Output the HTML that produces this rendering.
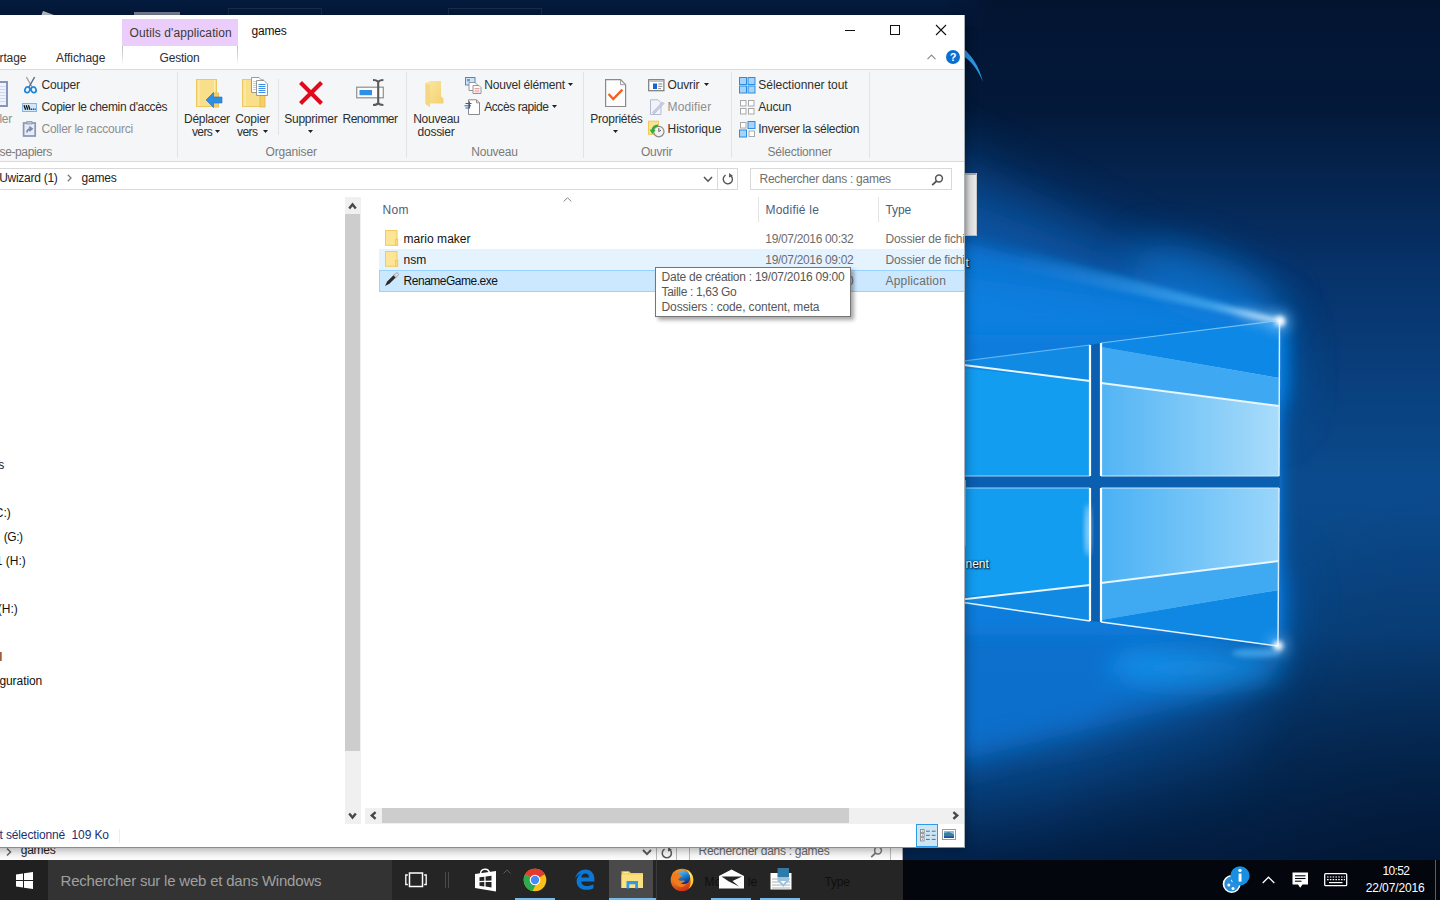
<!DOCTYPE html>
<html lang="fr">
<head>
<meta charset="utf-8">
<title>games</title>
<style>
*{box-sizing:border-box;margin:0;padding:0}
html,body{width:1440px;height:900px;overflow:hidden;background:#04183a}
body{position:relative;font-family:"Liberation Sans","DejaVu Sans",sans-serif;font-size:12px;color:#222}
#wall{position:absolute;left:0;top:0;width:1440px;height:900px}
.layer{position:absolute;left:0;top:0;width:0;height:0}
.a{position:absolute}
.t{position:absolute;white-space:pre;line-height:1;display:block}
svg.a{overflow:visible}
.vsep{position:absolute;width:1px;background:#e2e3e4}
</style>
</head>
<body>
<!--WALL-->
<svg id="wall" viewBox="0 0 1440 900">
<defs>
<linearGradient id="bgv" x1="0" y1="0" x2="0" y2="1">
<stop offset="0" stop-color="#031431"/>
<stop offset="0.12" stop-color="#03193a"/>
<stop offset="0.3" stop-color="#07326a"/>
<stop offset="0.42" stop-color="#093f7c"/>
<stop offset="0.53" stop-color="#0b4a8c"/>
<stop offset="0.7" stop-color="#0a4888"/>
<stop offset="0.86" stop-color="#052e5c"/>
<stop offset="0.95" stop-color="#031f45"/>
<stop offset="1" stop-color="#031f45"/>
</linearGradient>
<radialGradient id="brdark" cx="1440" cy="900" r="400" gradientUnits="userSpaceOnUse">
<stop offset="0" stop-color="#02132e" stop-opacity="0.7"/><stop offset="0.5" stop-color="#02132e" stop-opacity="0.33"/><stop offset="1" stop-color="#02132e" stop-opacity="0"/>
</radialGradient>
<filter id="b8w" x="-200%" y="-200%" width="500%" height="500%"><feGaussianBlur stdDeviation="7"/></filter>
<filter id="b20" x="-50%" y="-100%" width="200%" height="300%"><feGaussianBlur stdDeviation="20"/></filter>
<filter id="b14w" x="-50%" y="-200%" width="200%" height="500%"><feGaussianBlur stdDeviation="14"/></filter>
<filter id="b8" x="-20%" y="-20%" width="140%" height="140%"><feGaussianBlur stdDeviation="8"/></filter>
<filter id="b14" x="-30%" y="-30%" width="160%" height="160%"><feGaussianBlur stdDeviation="14"/></filter>
<filter id="b25" x="-30%" y="-30%" width="160%" height="160%"><feGaussianBlur stdDeviation="25"/></filter>
<filter id="b3" x="-50%" y="-50%" width="200%" height="200%"><feGaussianBlur stdDeviation="2.5"/></filter>
<filter id="b1" x="-20%" y="-50%" width="140%" height="200%"><feGaussianBlur stdDeviation="0.7"/></filter>
<linearGradient id="pUR" x1="1101" y1="0" x2="1279" y2="0" gradientUnits="userSpaceOnUse">
<stop offset="0" stop-color="#52b4f4"/><stop offset="1" stop-color="#a9dcfb"/>
</linearGradient>
<linearGradient id="pLR" x1="1101" y1="0" x2="1279" y2="0" gradientUnits="userSpaceOnUse">
<stop offset="0" stop-color="#4ab1f4"/><stop offset="1" stop-color="#9ad6fb"/>
</linearGradient>
</defs>
<rect width="1440" height="900" fill="url(#bgv)"/>
<!-- upper beams -->
<polygon points="1286,322 900,120 900,420 1286,420" fill="#0a5cae" opacity="0.45" filter="url(#b25)"/>
<polygon points="1285,322 900,178 900,420 1285,420" fill="#0a66c0" opacity="0.55" filter="url(#b25)"/>
<polygon points="1284,322 900,226 900,400 1284,400" fill="#0b78d8" opacity="0.88" filter="url(#b8)"/>
<polygon points="1282,323 900,268 900,400 1282,400" fill="#0e88ea" opacity="0.55" filter="url(#b14)"/>
<ellipse cx="1205" cy="288" rx="80" ry="34" transform="rotate(20 1205 288)" fill="#0c80e0" opacity="0.6" filter="url(#b20)"/>
<linearGradient id="ray1" x1="1282" y1="321" x2="1000" y2="250" gradientUnits="userSpaceOnUse"><stop offset="0" stop-color="#eaf7ff" stop-opacity="0.95"/><stop offset="0.25" stop-color="#5fc0fc" stop-opacity="0.55"/><stop offset="1" stop-color="#2f9cf0" stop-opacity="0.0"/></linearGradient>
<polygon points="1283,320 1000,244 1000,266 1283,325" fill="url(#ray1)" filter="url(#b3)"/>
<!-- lower beams (floor) -->
<polygon points="1295,646 1295,560 900,560 900,860 1250,775" fill="#0a5cae" opacity="0.24" filter="url(#b25)"/>
<polygon points="1290,646 1290,560 900,560 900,800 1230,728" fill="#0a66c0" opacity="0.42" filter="url(#b25)"/>
<polygon points="1284,646 1284,580 900,580 900,775 1200,702 1276,668" fill="#0b74d4" opacity="0.85" filter="url(#b14)"/>
<ellipse cx="1195" cy="668" rx="85" ry="18" fill="#1399f6" opacity="1" filter="url(#b14w)"/>
<rect x="900" y="400" width="540" height="500" fill="url(#brdark)"/>
<!-- mid fill left of logo -->
<rect x="900" y="335" width="382" height="300" fill="#0c7cdc" filter="url(#b8)"/>
<!-- logo gaps backdrop -->
<polygon points="940,364 1090,345 1101,343 1280,320 1279,647 1100,622 1090,621 940,599" fill="#0a5fb0"/>
<!-- panes -->
<polygon points="940,364 1090,345 1090,476 940,476" fill="#129df1"/>
<polygon points="940,488 1090,488 1090,621 940,599" fill="#129df1"/>
<polygon points="1101,343 1279.5,320.5 1279,476 1101,476" fill="url(#pUR)"/>
<polygon points="1101,488 1279,488 1278,646 1101,622" fill="url(#pLR)"/>
<!-- darker top wedge in panes -->
<polygon points="1101,343 1279.5,320.5 1279.3,378 1101,347" fill="#0e88e6"/>
<polygon points="1101,347 1279.3,378 1279.2,406 1101,383" fill="#3ea9f2"/>
<polygon points="940,364 1090,345 1090,381 940,366" fill="#118ae4"/>
<!-- lower wedge -->
<polygon points="1101,620 1278.4,590 1278,646 1101,622" fill="#0f88e4"/>
<polygon points="1101,583 1278.6,561 1278.4,590 1101,620" fill="#3fa9f2"/>
<polygon points="940,599 1090,585 1090,621 940,601" fill="#118ae4"/>
<!-- bright lines -->
<g stroke="#e8f6ff" stroke-width="2" fill="none" filter="url(#b1)">
<line x1="940" y1="362" x2="1090" y2="381"/>
<line x1="1101" y1="383" x2="1279.2" y2="406"/>
<line x1="940" y1="602" x2="1090" y2="585"/>
<line x1="1101" y1="583" x2="1278.6" y2="561"/>
</g>
<g fill="none">
<polyline points="940,364 1090,345" stroke="#5fb6f4" stroke-width="1.2"/>
<polyline points="1101,343 1279.5,320.5" stroke="#6fc0f6" stroke-width="1.2"/>
<polyline points="1279.5,320.5 1279,476" stroke="#d4eefe" stroke-width="1.5"/>
<line x1="1279" y1="488" x2="1278" y2="646" stroke="#d4eefe" stroke-width="1.5"/>
<polyline points="940,476 1090,476" stroke="#9fd4fa" stroke-width="1"/>
<polyline points="1101,476 1279,476" stroke="#cfeafd" stroke-width="1"/>
<polyline points="940,488 1090,488" stroke="#9fd4fa" stroke-width="1"/>
<polyline points="1101,488 1279,488" stroke="#cfeafd" stroke-width="1"/>
<g stroke="#ffffff" stroke-width="2.2" filter="url(#b1)">
<line x1="1090" y1="345" x2="1090" y2="476"/><line x1="1101" y1="343" x2="1101" y2="476"/>
<line x1="1090" y1="488" x2="1090" y2="621"/><line x1="1101" y1="488" x2="1101" y2="622"/>
</g>
<g stroke="#e4f4ff" stroke-width="1.5">
<line x1="940" y1="599" x2="1090" y2="621"/><line x1="1101" y1="622" x2="1278" y2="646"/>
</g>
</g>
<!-- flares -->
<ellipse cx="1262" cy="318" rx="26" ry="5" transform="rotate(14 1262 318)" fill="#bfe4ff" opacity="0.5" filter="url(#b8w)"/>
<circle cx="1280" cy="321" r="10" fill="#8fd0ff" opacity="0.5" filter="url(#b8w)"/>
<circle cx="1278" cy="646" r="10" fill="#8fd0ff" opacity="0.5" filter="url(#b8w)"/>
<circle cx="1280" cy="321" r="5" fill="#ffffff" filter="url(#b3)"/>
<circle cx="1278" cy="646" r="5" fill="#ffffff" filter="url(#b3)"/>
<ellipse cx="1256" cy="653" rx="24" ry="4.5" fill="#5fc0ff" opacity="0.55" filter="url(#b3)"/>
<ellipse cx="1088" cy="530" rx="3" ry="26" fill="#ffffff" opacity="0.55" filter="url(#b3)"/>
</svg>
<!--/WALL-->
<div class="layer" id="desktop">
<div class="a" style="left:0;top:840px;width:903px;height:30px;background:#ffffff;border-right:1px solid #b0b0b0"></div>
<svg class="a" style="left:6px;top:848px" width="6" height="8" viewBox="0 0 6 8"><polyline points="1,0.5 4.5,4 1,7.5" fill="none" stroke="#6a6a6a" stroke-width="1.5"/></svg>
<span class="t" style="left:20.80px;top:844.00px;font-size:12px;color:#222;letter-spacing:-0.286px;">games</span>
<svg class="a" style="left:642px;top:849px" width="10" height="7" viewBox="0 0 10 7"><polyline points="1,1 5,5.2 9,1" fill="none" stroke="#5c5c5c" stroke-width="1.9"/></svg>
<div class="a" style="left:656px;top:847px;width:1px;height:13px;background:#bcbcbc"></div>
<svg class="a" style="left:660px;top:846px" width="14" height="14" viewBox="0 0 14 14"><path d="M10.3,4.2 A4.6,4.6 0 1 1 4.6,3.2" fill="none" stroke="#5c5c5c" stroke-width="1.5"/><polygon points="8.2,1 12,4 8,5.6" fill="#5c5c5c"/></svg>
<div class="a" style="left:676px;top:847px;width:1px;height:13px;background:#bcbcbc"></div>
<div class="a" style="left:689px;top:847px;width:1px;height:13px;background:#bcbcbc"></div>
<div class="a" style="left:890px;top:847px;width:1px;height:13px;background:#bcbcbc"></div>
<span class="t" style="left:698.60px;top:845.00px;font-size:12px;color:#6a6a6a;letter-spacing:-0.287px;">Rechercher dans : games</span>
<svg class="a" style="left:870px;top:846px" width="13" height="12" viewBox="0 0 13 12"><circle cx="8" cy="4.5" r="3.4" fill="none" stroke="#787878" stroke-width="1.5"/><line x1="5.6" y1="7" x2="1.2" y2="11.2" stroke="#787878" stroke-width="1.8"/></svg>
<div class="a" style="left:960px;top:173px;width:17px;height:63px;background:linear-gradient(#a8a8a8 0,#a8a8a8 2px,transparent 2px),linear-gradient(90deg,#c4c4c4 5px,#e4e4e4 9px,#ececec 100%);border-right:1px solid #c8c8c8;border-bottom:1px solid #bdbdbd"></div>
<div class="a" style="left:960px;top:480px;width:6px;height:66px;background:#f4f4f4;border-right:1px solid #a0a0a0"></div>
<span class="t" style="left:965.50px;top:257.00px;font-size:12px;color:#fff;text-shadow:1px 1px 2px #000,0 0 2px #000;">t</span>
<span class="t" style="left:965.50px;top:558.00px;font-size:12px;color:#fff;letter-spacing:-0.015px;text-shadow:1px 1px 2px #000,0 0 2px #000;">nent</span>
<svg class="a" style="left:960px;top:44px" width="30" height="44" viewBox="0 0 30 44"><path d="M3,4 C12,12 19,22 23,38 C17,24 11,17 3,12 Z" fill="#2a98e6"/></svg>
<div class="a" style="left:0;top:0;width:990px;height:26px;background:linear-gradient(90deg,rgba(8,46,96,.25) 0,rgba(8,46,96,.25) 940px,rgba(8,46,96,0) 990px)"></div>
<div class="a" style="left:228px;top:8px;width:94px;height:12px;border:1px solid #1c2c4c"></div>
<div class="a" style="left:448px;top:8px;width:94px;height:12px;border:1px solid #1c2c4c"></div>
<div class="a" style="left:134px;top:12px;width:46px;height:4px;background:#7f8a9c"></div>
<svg class="a" style="left:40px;top:10px" width="16" height="6" viewBox="0 0 16 6"><polygon points="1,6 3,1 14,5 14,6" fill="#c9d0da"/></svg>
</div>
<div class="layer" id="explorer">
<div class="a" id="frame" style="left:-40px;top:15px;width:1005px;height:833px;background:#fff;box-shadow:0 1px 11px rgba(0,0,0,.42);border-right:1px solid #aab0b8;border-bottom:1px solid #8c8c8c"></div>
<div class="a" style="left:122px;top:19px;width:116px;height:27px;background:#ebcdfb"></div>
<span class="t" style="left:129.60px;top:27.00px;font-size:12px;color:#3a3a3a;letter-spacing:0.097px;">Outils d'application</span>
<span class="t" style="left:251.40px;top:25.00px;font-size:12px;color:#111;letter-spacing:-0.146px;">games</span>
<svg class="a" style="left:845px;top:30px" width="10" height="1" viewBox="0 0 10 1"><rect width="10" height="1" fill="#111"/></svg>
<svg class="a" style="left:890px;top:25px" width="10" height="10" viewBox="0 0 10 10"><rect x="0.5" y="0.5" width="9" height="9" fill="none" stroke="#111" stroke-width="1"/></svg>
<svg class="a" style="left:936px;top:25px" width="10" height="10" viewBox="0 0 10 10"><path d="M0,0 L10,10 M10,0 L0,10" stroke="#111" stroke-width="1.1" fill="none"/></svg>
<span class="t" style="left:0.00px;top:52.00px;font-size:12px;color:#2e2e2e;letter-spacing:-0.112px;left:-0.5px;">rtage</span>
<span class="t" style="left:56.00px;top:52.00px;font-size:12px;color:#2e2e2e;letter-spacing:-0.059px;">Affichage</span>
<div class="a" style="left:122px;top:46px;width:1px;height:19px;background:linear-gradient(#bdbdbd,#e4e4e4 70%,#fff)"></div>
<div class="a" style="left:237px;top:46px;width:1px;height:19px;background:linear-gradient(#bdbdbd,#e4e4e4 70%,#fff)"></div>
<span class="t" style="left:159.60px;top:52.00px;font-size:12px;color:#2e2e2e;letter-spacing:-0.223px;">Gestion</span>
<svg class="a" style="left:927px;top:54px" width="9" height="6" viewBox="0 0 9 6"><polyline points="0.5,5.2 4.5,1 8.5,5.2" fill="none" stroke="#8c8c8c" stroke-width="1.2"/></svg>
<div class="a" style="left:946px;top:50px;width:14px;height:14px;border-radius:7px;background:#0a6fd0;color:#fff;font-weight:bold;font-size:11px;line-height:14px;text-align:center">?</div>
<div class="a" id="ribbon" style="left:0;top:69px;width:964px;height:93px;background:#f5f6f7;border-top:1px solid #dadbdc;border-bottom:1px solid #dadbdc"></div>
<div class="vsep" style="left:177px;top:72px;height:86px"></div>
<div class="vsep" style="left:406px;top:72px;height:86px"></div>
<div class="vsep" style="left:583px;top:72px;height:86px"></div>
<div class="vsep" style="left:731px;top:72px;height:86px"></div>
<div class="vsep" style="left:869px;top:72px;height:86px"></div>
<div class="vsep" style="left:278px;top:79px;height:56px"></div>
<svg class="a" style="left:0px;top:80px" width="9" height="28" viewBox="0 0 9 28"><rect x="-10" y="2" width="17" height="24" fill="#eef2fb" stroke="#8796b8" stroke-width="2"/><g stroke="#cdd8ee" stroke-width="1"><line x1="-8" y1="6.5" x2="5.5" y2="6.5"/><line x1="-8" y1="9.5" x2="5.5" y2="9.5"/><line x1="-8" y1="12.5" x2="5.5" y2="12.5"/><line x1="-8" y1="15.5" x2="5.5" y2="15.5"/><line x1="-8" y1="18.5" x2="5.5" y2="18.5"/><line x1="-8" y1="21.5" x2="5.5" y2="21.5"/></g></svg>
<span class="t" style="left:0.00px;top:113.00px;font-size:12px;color:#8e8e8e;letter-spacing:-0.348px;left:-0.5px;">ler</span>
<svg class="a" style="left:24px;top:76px" width="13" height="18" viewBox="0 0 13 18"><path d="M2.4,1 L8,11" stroke="#a0a0a0" stroke-width="1.4" fill="none"/><path d="M10.6,1 L5,11" stroke="#56687c" stroke-width="1.4" fill="none"/><ellipse cx="3.4" cy="13.8" rx="2.4" ry="2.9" fill="none" stroke="#1c86dc" stroke-width="1.7" transform="rotate(25 3.4 13.8)"/><ellipse cx="9.6" cy="13.8" rx="2.4" ry="2.9" fill="none" stroke="#1c86dc" stroke-width="1.7" transform="rotate(-25 9.6 13.8)"/></svg>
<span class="t" style="left:41.50px;top:79.00px;font-size:12px;color:#2e2e2e;letter-spacing:-0.177px;">Couper</span>
<svg class="a" style="left:22px;top:103px" width="15" height="9" viewBox="0 0 15 9"><rect x="0.5" y="0.5" width="14" height="8" fill="#cfe6fb" stroke="#7fb4e6"/><path d="M2,2.2 L3.6,6.8 M4.2,2.2 L5.8,6.8 M6.4,2.2 L8,6.8" stroke="#111" stroke-width="1.3"/><rect x="9" y="5.6" width="1.1" height="1.2" fill="#111"/><rect x="10.8" y="5.6" width="1.1" height="1.2" fill="#111"/><rect x="12.6" y="5.6" width="1.1" height="1.2" fill="#111"/></svg>
<span class="t" style="left:41.50px;top:101.00px;font-size:12px;color:#2e2e2e;letter-spacing:-0.329px;">Copier le chemin d'accès</span>
<svg class="a" style="left:22px;top:120px" width="15" height="18" viewBox="0 0 15 18"><rect x="1.6" y="3" width="11.6" height="13" fill="#e6ebf6" stroke="#8796b8" stroke-width="1.7"/><rect x="4.8" y="1.4" width="5.2" height="2.6" fill="#b9c3da" stroke="#8796b8" stroke-width="0.8"/><path d="M5,12.5 C5,10 6.5,8.8 9,8.8 M7.2,6.6 L10,8.8 L7.2,11" stroke="#7d8aad" stroke-width="1.7" fill="none"/></svg>
<span class="t" style="left:41.50px;top:123.00px;font-size:12px;color:#8e8e8e;letter-spacing:-0.249px;">Coller le raccourci</span>
<span class="t" style="left:0.00px;top:146.00px;font-size:12px;color:#7a7a7a;letter-spacing:-0.373px;left:-0.5px;">se-papiers</span>
<svg class="a" style="left:196px;top:79px" width="27" height="30" viewBox="0 0 27 30"><rect x="0.5" y="0.5" width="20" height="27" fill="#fadf8a" stroke="#ecc960"/><line x1="3" y1="1.5" x2="3" y2="27" stroke="#fdeeb8" stroke-width="1"/><line x1="18.5" y1="1.5" x2="18.5" y2="14" stroke="#fdeeb8" stroke-width="1"/><rect x="17" y="14" width="5.5" height="14" fill="#f4cf66" stroke="#e2b84a" stroke-width="0.8"/><polygon points="10,21 17.5,13.5 17.5,18 26,18 26,24 17.5,24 17.5,28.5" fill="#2f8ee4" stroke="#1f6fc4" stroke-width="0.6"/></svg>
<span class="t" style="left:184.00px;top:113.00px;font-size:12px;color:#2e2e2e;letter-spacing:-0.279px;">Déplacer</span>
<span class="t" style="left:192.00px;top:126.00px;font-size:12px;color:#2e2e2e;letter-spacing:-0.643px;">vers</span>
<svg class="a" style="left:215px;top:130px" width="5" height="3" viewBox="0 0 5 3"><polygon points="0,0 5,0 2.5,3" fill="#222"/></svg>
<svg class="a" style="left:242px;top:76px" width="28" height="32" viewBox="0 0 28 32"><rect x="0.5" y="3.5" width="21" height="27" fill="#fadf8a" stroke="#ecc960"/><line x1="3" y1="4.5" x2="3" y2="30" stroke="#fdeeb8" stroke-width="1"/><rect x="18" y="18" width="5" height="13" fill="#f4cf66" stroke="#e2b84a" stroke-width="0.8"/><polygon points="9.5,1.5 17,1.5 20,4.5 20,16.5 9.5,16.5" fill="#fff" stroke="#8f8f8f" stroke-width="0.9"/><g stroke="#a9ccf4" stroke-width="0.9"><line x1="11" y1="5.5" x2="15" y2="5.5"/><line x1="11" y1="7.5" x2="15" y2="7.5"/><line x1="11" y1="9.5" x2="15" y2="9.5"/><line x1="11" y1="11.5" x2="15" y2="11.5"/><line x1="11" y1="13.5" x2="15" y2="13.5"/></g><polygon points="14.5,4.5 22,4.5 25.5,8 25.5,19.5 14.5,19.5" fill="#fff" stroke="#8f8f8f" stroke-width="0.9"/><g stroke="#3f8fe6" stroke-width="1"><line x1="16.5" y1="8.5" x2="23.5" y2="8.5"/><line x1="16.5" y1="10.5" x2="23.5" y2="10.5"/><line x1="16.5" y1="12.5" x2="23.5" y2="12.5"/><line x1="16.5" y1="14.5" x2="23.5" y2="14.5"/><line x1="16.5" y1="16.5" x2="23.5" y2="16.5"/></g></svg>
<span class="t" style="left:235.30px;top:113.00px;font-size:12px;color:#2e2e2e;letter-spacing:-0.177px;">Copier</span>
<span class="t" style="left:237.10px;top:126.00px;font-size:12px;color:#2e2e2e;letter-spacing:-0.618px;">vers</span>
<svg class="a" style="left:263px;top:130px" width="5" height="3" viewBox="0 0 5 3"><polygon points="0,0 5,0 2.5,3" fill="#222"/></svg>
<svg class="a" style="left:298px;top:80px" width="26" height="26" viewBox="0 0 26 26"><path d="M2.5,2.5 L23.5,23.5 M23.5,2.5 L2.5,23.5" stroke="#e00a1c" stroke-width="4.1" fill="none"/></svg>
<span class="t" style="left:284.20px;top:113.00px;font-size:12px;color:#2e2e2e;letter-spacing:-0.229px;">Supprimer</span>
<svg class="a" style="left:308px;top:130px" width="5" height="3" viewBox="0 0 5 3"><polygon points="0,0 5,0 2.5,3" fill="#222"/></svg>
<svg class="a" style="left:356px;top:79px" width="29" height="28" viewBox="0 0 29 28"><rect x="0.7" y="8.2" width="26.6" height="10.6" fill="#fbfbfb" stroke="#8f8f8f" stroke-width="1.2"/><rect x="3.5" y="11" width="12.5" height="5.2" fill="#2f8fe6"/><path d="M17,1 C20,1 21.5,1.6 22.2,3 C23,1.6 24.5,1 27.4,1 M17,26 C20,26 21.5,25.4 22.2,24 C23,25.4 24.5,26 27.4,26 M22.2,3 L22.2,24" stroke="#5a5a5a" stroke-width="2.1" fill="none"/></svg>
<span class="t" style="left:342.60px;top:113.00px;font-size:12px;color:#2e2e2e;letter-spacing:-0.570px;">Renommer</span>
<span class="t" style="left:265.50px;top:146.00px;font-size:12px;color:#7a7a7a;letter-spacing:-0.154px;">Organiser</span>
<svg class="a" style="left:425px;top:80px" width="20" height="28" viewBox="0 0 20 28"><defs><linearGradient id="nf" x1="0" y1="0" x2="1" y2="1"><stop offset="0" stop-color="#fbe7a3"/><stop offset="1" stop-color="#f3cf6c"/></linearGradient></defs><polygon points="0.5,3 5,1 16,1 16,16 18.5,18.5 18.5,23.5 5,23.5 5,27 0.5,24" fill="url(#nf)"/><polygon points="0.5,3 5,5.5 5,27 0.5,24" fill="#f5d782"/></svg>
<span class="t" style="left:413.20px;top:113.00px;font-size:12px;color:#2e2e2e;letter-spacing:-0.250px;">Nouveau</span>
<span class="t" style="left:417.60px;top:126.00px;font-size:12px;color:#2e2e2e;letter-spacing:-0.270px;">dossier</span>
<svg class="a" style="left:465px;top:77px" width="17" height="17" viewBox="0 0 17 17"><rect x="0.5" y="0.5" width="9.5" height="7.5" fill="#cde4f8" stroke="#3f8fd0"/><rect x="2" y="2" width="3" height="2.4" fill="#6a9ad0"/><polygon points="4,5.5 10,5.5 12,7.5 12,13.5 4,13.5" fill="#fff" stroke="#8a8a8a" stroke-width="0.9"/><polygon points="8,8.5 14,8.5 16,10.5 16,16.5 8,16.5" fill="#fff" stroke="#8a8a8a" stroke-width="0.9"/><g stroke="#e08a8a" stroke-width="0.8"><line x1="9.5" y1="11.5" x2="14.5" y2="11.5"/><line x1="9.5" y1="13.2" x2="14.5" y2="13.2"/><line x1="9.5" y1="14.9" x2="14.5" y2="14.9"/></g></svg>
<span class="t" style="left:484.20px;top:79.00px;font-size:12px;color:#2e2e2e;letter-spacing:-0.185px;">Nouvel élément</span>
<svg class="a" style="left:568px;top:83px" width="5" height="3" viewBox="0 0 5 3"><polygon points="0,0 5,0 2.5,3" fill="#222"/></svg>
<svg class="a" style="left:464px;top:99px" width="17" height="17" viewBox="0 0 17 17"><polygon points="4.5,0.8 12.5,0.8 15.5,3.8 15.5,15.5 4.5,15.5" fill="#fff" stroke="#8a8a8a" stroke-width="1"/><polyline points="12.5,0.8 12.5,3.8 15.5,3.8" fill="none" stroke="#8a8a8a" stroke-width="0.9"/><g stroke="#1e64b4" stroke-width="1"><line x1="1.5" y1="4.5" x2="7.5" y2="4.5"/><line x1="0.5" y1="6.8" x2="7" y2="6.8"/><line x1="1.5" y1="9" x2="6" y2="9"/><line x1="5.5" y1="2.5" x2="5.5" y2="9"/></g></svg>
<span class="t" style="left:484.20px;top:101.00px;font-size:12px;color:#2e2e2e;letter-spacing:-0.423px;">Accès rapide</span>
<svg class="a" style="left:552px;top:105px" width="5" height="3" viewBox="0 0 5 3"><polygon points="0,0 5,0 2.5,3" fill="#222"/></svg>
<span class="t" style="left:471.30px;top:146.00px;font-size:12px;color:#7a7a7a;letter-spacing:-0.250px;">Nouveau</span>
<svg class="a" style="left:605px;top:79px" width="22" height="29" viewBox="0 0 22 29"><polygon points="0.6,0.7 15.6,0.7 20.6,5.7 20.6,27.5 0.6,27.5" fill="#fdfdfd" stroke="#8a8a8a" stroke-width="1.2"/><polyline points="15.6,0.7 15.6,5.7 20.6,5.7" fill="none" stroke="#9a9a9a" stroke-width="1"/><polyline points="3.6,15 8.2,20 17.4,10.6" fill="none" stroke="#f4601e" stroke-width="2.3"/></svg>
<span class="t" style="left:590.30px;top:113.00px;font-size:12px;color:#2e2e2e;letter-spacing:-0.240px;">Propriétés</span>
<svg class="a" style="left:613px;top:130px" width="5" height="3" viewBox="0 0 5 3"><polygon points="0,0 5,0 2.5,3" fill="#222"/></svg>
<svg class="a" style="left:648px;top:79px" width="17" height="13" viewBox="0 0 17 13"><rect x="0.7" y="0.7" width="15.2" height="11" fill="#fff" stroke="#7a7a7a" stroke-width="1.2"/><rect x="1.3" y="1.3" width="14" height="1.6" fill="#bcbcbc"/><rect x="5" y="4.5" width="4" height="5.5" fill="#1166d6"/><g stroke="#6a6a6a" stroke-width="0.8"><line x1="10.2" y1="5" x2="14.4" y2="5"/><line x1="10.2" y1="7.3" x2="14.4" y2="7.3"/><line x1="10.2" y1="9.6" x2="13" y2="9.6"/></g></svg>
<span class="t" style="left:667.50px;top:79.00px;font-size:12px;color:#2e2e2e;letter-spacing:-0.145px;">Ouvrir</span>
<svg class="a" style="left:704px;top:83px" width="5" height="3" viewBox="0 0 5 3"><polygon points="0,0 5,0 2.5,3" fill="#222"/></svg>
<svg class="a" style="left:649px;top:99px" width="16" height="17" viewBox="0 0 16 17"><polygon points="1.5,0.8 9,0.8 12,3.8 12,15.5 1.5,15.5" fill="#f1f3fa" stroke="#b4bad0" stroke-width="1"/><path d="M3.5,13.5 L13.5,3 L15,4.5 L5,15 Z" fill="#c9d0e6" stroke="#aab2cf" stroke-width="0.7"/></svg>
<span class="t" style="left:667.50px;top:101.00px;font-size:12px;color:#8e8e8e;letter-spacing:0.139px;">Modifier</span>
<svg class="a" style="left:648px;top:120px" width="17" height="18" viewBox="0 0 17 18"><rect x="0.5" y="1.2" width="10" height="13.2" fill="#fbe394" stroke="#efc95c" stroke-width="1"/><circle cx="10.8" cy="11.6" r="5.2" fill="#f2f2f2" stroke="#8a8a8a" stroke-width="1.2"/><path d="M10.8,8 L10.8,11.6 L13,10.2" stroke="#555" stroke-width="0.9" fill="none"/><path d="M10,5.6 C7,5.6 4.8,7.6 4.6,10.4" stroke="#2fae3c" stroke-width="2.4" fill="none"/><polygon points="1.6,9.4 7.6,10 4.2,14" fill="#2fae3c"/></svg>
<span class="t" style="left:667.50px;top:123.00px;font-size:12px;color:#2e2e2e;letter-spacing:-0.023px;">Historique</span>
<span class="t" style="left:641.00px;top:146.00px;font-size:12px;color:#7a7a7a;letter-spacing:-0.229px;">Ouvrir</span>
<svg class="a" style="left:739px;top:77px" width="17" height="17" viewBox="0 0 17 17"><rect x="0.5" y="0.5" width="7" height="7" fill="#a6d3f8" stroke="#2b8de2" stroke-width="1"/><rect x="9" y="0.5" width="7" height="7" fill="#a6d3f8" stroke="#2b8de2" stroke-width="1"/><rect x="0.5" y="9" width="7" height="7" fill="#a6d3f8" stroke="#2b8de2" stroke-width="1"/><rect x="9" y="9" width="7" height="7" fill="#a6d3f8" stroke="#2b8de2" stroke-width="1"/></svg>
<span class="t" style="left:758.30px;top:79.00px;font-size:12px;color:#2e2e2e;letter-spacing:-0.045px;">Sélectionner tout</span>
<svg class="a" style="left:740px;top:100px" width="16" height="15" viewBox="0 0 16 15"><rect x="0.5" y="0.5" width="5.5" height="5.5" fill="#fff" stroke="#a8a8a8" stroke-width="1"/><rect x="8.5" y="0.5" width="5.5" height="5.5" fill="#fff" stroke="#a8a8a8" stroke-width="1"/><rect x="0.5" y="8.5" width="5.5" height="5.5" fill="#fff" stroke="#a8a8a8" stroke-width="1"/><rect x="8.5" y="8.5" width="5.5" height="5.5" fill="#fff" stroke="#a8a8a8" stroke-width="1"/></svg>
<span class="t" style="left:758.30px;top:101.00px;font-size:12px;color:#2e2e2e;letter-spacing:-0.246px;">Aucun</span>
<svg class="a" style="left:739px;top:121px" width="17" height="17" viewBox="0 0 17 17"><rect x="1.5" y="1.5" width="5.5" height="5.5" fill="#fff" stroke="#a8a8a8" stroke-width="1"/><rect x="9" y="0.5" width="7" height="7" fill="#a6d3f8" stroke="#2b8de2" stroke-width="1"/><rect x="0.5" y="9" width="7" height="7" fill="#a6d3f8" stroke="#2b8de2" stroke-width="1"/><rect x="10" y="10" width="5.5" height="5.5" fill="#fff" stroke="#a8a8a8" stroke-width="1"/></svg>
<span class="t" style="left:758.30px;top:123.00px;font-size:12px;color:#2e2e2e;letter-spacing:-0.282px;">Inverser la sélection</span>
<span class="t" style="left:767.50px;top:146.00px;font-size:12px;color:#7a7a7a;letter-spacing:-0.202px;">Sélectionner</span>
<div class="a" id="addr" style="left:-10px;top:168px;width:748px;height:22px;border:1px solid #d9d9d9;background:#fff"></div>
<div class="a" style="left:717px;top:169px;width:1px;height:20px;background:#d9d9d9"></div>
<span class="t" style="left:0.00px;top:172.00px;font-size:12px;color:#222;letter-spacing:-0.277px;left:-0.8px;">Uwizard (1)</span>
<svg class="a" style="left:67px;top:174px" width="5" height="8" viewBox="0 0 5 8"><polyline points="0.8,0.8 4,4 0.8,7.2" fill="none" stroke="#7a7a7a" stroke-width="1.3"/></svg>
<span class="t" style="left:81.60px;top:172.00px;font-size:12px;color:#222;letter-spacing:-0.206px;">games</span>
<svg class="a" style="left:703px;top:176px" width="10" height="7" viewBox="0 0 10 7"><polyline points="1,1 5,5.2 9,1" fill="none" stroke="#555" stroke-width="1.6"/></svg>
<svg class="a" style="left:721px;top:172px" width="14" height="14" viewBox="0 0 14 14"><path d="M10.3,4.2 A4.6,4.6 0 1 1 4.6,3.2" fill="none" stroke="#555" stroke-width="1.4"/><polygon points="8.2,1 12,4 8,5.6" fill="#555"/></svg>
<div class="a" id="search" style="left:750px;top:168px;width:202px;height:22px;border:1px solid #d9d9d9;background:#fff"></div>
<span class="t" style="left:759.50px;top:173.00px;font-size:12px;color:#707070;letter-spacing:-0.265px;">Rechercher dans : games</span>
<svg class="a" style="left:931px;top:174px" width="13" height="12" viewBox="0 0 13 12"><circle cx="8" cy="4.5" r="3.4" fill="none" stroke="#555" stroke-width="1.5"/><line x1="5.6" y1="7" x2="1.2" y2="11.2" stroke="#555" stroke-width="1.8"/></svg>
<span class="t" style="left:0.00px;top:459.00px;font-size:12px;color:#111;left:auto;right:-4.2px;">s</span>
<span class="t" style="left:0.00px;top:507.00px;font-size:12px;color:#111;left:auto;right:-10.8px;">C:)</span>
<span class="t" style="left:0.00px;top:555.00px;font-size:12px;color:#111;left:auto;right:-25.8px;">1 (H:)</span>
<span class="t" style="left:0.00px;top:603.00px;font-size:12px;color:#111;left:auto;right:-17.8px;">(H:)</span>
<span class="t" style="left:0.00px;top:651.00px;font-size:12px;color:#111;left:auto;right:-2.2px;">l</span>
<span class="t" style="left:3.80px;top:531.00px;font-size:12px;color:#111;letter-spacing:-0.468px;">(G:)</span>
<span class="t" style="left:0.00px;top:675.00px;font-size:12px;color:#111;letter-spacing:-0.072px;left:-0.6px;">guration</span>
<div class="a" style="left:345px;top:197px;width:16px;height:627px;background:#f0f0f0"></div>
<div class="a" style="left:345px;top:214px;width:15px;height:537px;background:#cdcdcd"></div>
<svg class="a" style="left:348px;top:202px" width="9" height="8" viewBox="0 0 9 8"><polyline points="1.2,6.4 4.5,2.4 7.8,6.4" fill="none" stroke="#484848" stroke-width="2.4"/></svg>
<svg class="a" style="left:348px;top:812px" width="9" height="8" viewBox="0 0 9 8"><polyline points="1.2,1.6 4.5,5.6 7.8,1.6" fill="none" stroke="#484848" stroke-width="2.4"/></svg>
<span class="t" style="left:382.60px;top:204.00px;font-size:12px;color:#4c607a;letter-spacing:0.319px;">Nom</span>
<svg class="a" style="left:563px;top:197px" width="9" height="5" viewBox="0 0 9 5"><polyline points="0.6,4.5 4.5,0.8 8.4,4.5" fill="none" stroke="#8a8a8a" stroke-width="1"/></svg>
<div class="a" style="left:758px;top:197px;width:1px;height:25px;background:#e5e5e5"></div>
<div class="a" style="left:878px;top:197px;width:1px;height:25px;background:#e5e5e5"></div>
<span class="t" style="left:765.50px;top:204.00px;font-size:12px;color:#4c607a;letter-spacing:0.224px;">Modifié le</span>
<span class="t" style="left:885.60px;top:204.00px;font-size:12px;color:#4c607a;letter-spacing:-0.179px;">Type</span>
<div class="a" style="left:379px;top:249px;width:585px;height:21px;background:#e5f3ff"></div>
<div class="a" style="left:379px;top:270px;width:585px;height:22px;background:#cce8ff;border:1px solid #99d1ff;border-right:none"></div>
<svg class="a" style="left:384.5px;top:229.5px" width="14" height="17" viewBox="0 0 14 17"><rect x="0.5" y="0.5" width="11.5" height="14.8" fill="#fce595" stroke="#f0cb62" stroke-width="1"/><rect x="10.6" y="9.2" width="2.2" height="6.1" fill="#fadc7c" stroke="#eec45a" stroke-width="0.8"/></svg>
<svg class="a" style="left:384.5px;top:250.5px" width="14" height="17" viewBox="0 0 14 17"><rect x="0.5" y="0.5" width="11.5" height="14.8" fill="#fce595" stroke="#f0cb62" stroke-width="1"/><rect x="10.6" y="9.2" width="2.2" height="6.1" fill="#fadc7c" stroke="#eec45a" stroke-width="0.8"/></svg>
<svg class="a" style="left:384px;top:272px" width="15" height="15" viewBox="0 0 15 15"><path d="M1,14 L3.2,9.6 L10.5,2.3 L12.7,4.5 L5.4,11.8 Z" fill="#2a2a2a"/><path d="M9.5,3.3 L11.5,1.3 C12.3,0.5 13.4,0.6 14,1.3 C15,2 14.5,3 13.8,3.7 L11.8,5.6 Z" fill="#d8d8d8" stroke="#8a8a8a" stroke-width="0.6"/></svg>
<span class="t" style="left:403.60px;top:233.00px;font-size:12px;color:#111;letter-spacing:0.028px;">mario maker</span>
<span class="t" style="left:403.60px;top:254.00px;font-size:12px;color:#111;letter-spacing:-0.024px;">nsm</span>
<span class="t" style="left:403.60px;top:275.00px;font-size:12px;color:#111;letter-spacing:-0.494px;">RenameGame.exe</span>
<span class="t" style="left:765.30px;top:233.00px;font-size:12px;color:#6d6d6d;letter-spacing:-0.333px;">19/07/2016 00:32</span>
<span class="t" style="left:765.30px;top:254.00px;font-size:12px;color:#6d6d6d;letter-spacing:-0.333px;">19/07/2016 09:02</span>
<div class="a" style="left:885px;top:228px;width:79px;height:64px;overflow:hidden"><span class="t" style="left:0.60px;top:5.00px;font-size:12px;color:#6d6d6d;letter-spacing:-0.179px;">Dossier de fichiers</span><span class="t" style="left:0.60px;top:26.00px;font-size:12px;color:#6d6d6d;letter-spacing:-0.179px;">Dossier de fichiers</span><span class="t" style="left:0.60px;top:47.00px;font-size:12px;color:#6d6d6d;letter-spacing:0.153px;">Application</span></div>
<span class="t" style="left:765.30px;top:275.00px;font-size:12px;color:#6d6d6d;letter-spacing:-0.333px;">19/07/2016 09:00</span>
<div class="a" id="tip" style="left:655px;top:267px;width:196px;height:50px;background:#fff;border:1px solid #767676;box-shadow:3px 3px 4px rgba(0,0,0,.35)"></div>
<span class="t" style="left:661.60px;top:271.00px;font-size:12px;color:#575757;letter-spacing:-0.248px;">Date de création : 19/07/2016 09:00</span>
<span class="t" style="left:661.60px;top:286.00px;font-size:12px;color:#575757;letter-spacing:-0.328px;">Taille : 1,63 Go</span>
<span class="t" style="left:661.60px;top:301.00px;font-size:12px;color:#575757;letter-spacing:-0.143px;">Dossiers : code, content, meta</span>
<div class="a" style="left:365px;top:808px;width:599px;height:16px;background:#f0f0f0"></div>
<div class="a" style="left:382px;top:808px;width:467px;height:15px;background:#cdcdcd"></div>
<svg class="a" style="left:370px;top:811px" width="7" height="9" viewBox="0 0 7 9"><polyline points="5.6,1.2 1.8,4.5 5.6,7.8" fill="none" stroke="#484848" stroke-width="2.4"/></svg>
<svg class="a" style="left:952px;top:811px" width="7" height="9" viewBox="0 0 7 9"><polyline points="1.4,1.2 5.2,4.5 1.4,7.8" fill="none" stroke="#484848" stroke-width="2.4"/></svg>
<span class="t" style="left:0.00px;top:829.00px;font-size:12px;color:#1e2f6f;letter-spacing:-0.132px;left:-0.5px;">t sélectionné  109 Ko</span>
<div class="a" style="left:119px;top:829px;width:1px;height:14px;background:#ececec"></div>
<div class="a" style="left:916px;top:824px;width:22px;height:23px;background:#cce6f7;border:1px solid #2f9be8"></div>
<svg class="a" style="left:920px;top:829px" width="16" height="13" viewBox="0 0 16 13"><g fill="#fff" stroke="#8a8a8a" stroke-width="0.9"><rect x="0.5" y="0.5" width="3.6" height="3.2"/><rect x="0.5" y="4.6" width="3.6" height="3.2"/><rect x="0.5" y="8.7" width="3.6" height="3.2"/></g><rect x="1.8" y="1.6" width="1" height="1" fill="#3a8a4a"/><rect x="1.8" y="5.7" width="1" height="1" fill="#3a7ad8"/><rect x="1.8" y="9.8" width="1" height="1" fill="#d83a3a"/><g stroke="#6a6a6a" stroke-width="1"><line x1="6" y1="2.2" x2="9.8" y2="2.2"/><line x1="11.8" y1="2.2" x2="15.6" y2="2.2"/><line x1="6" y1="6.3" x2="9.8" y2="6.3"/><line x1="11.8" y1="6.3" x2="15.6" y2="6.3"/><line x1="6" y1="10.4" x2="9.8" y2="10.4"/><line x1="11.8" y1="10.4" x2="15.6" y2="10.4"/></g></svg>
<svg class="a" style="left:942px;top:829px" width="14" height="11" viewBox="0 0 14 11"><rect x="0.5" y="0.5" width="13" height="10" fill="#fff" stroke="#9a9a9a"/><rect x="2" y="2" width="10" height="7" fill="#7fbcf0"/><polygon points="2,4 7,3 12,5.5 12,7.5 2,7.5" fill="#3f7f8f"/><rect x="2" y="7.2" width="10" height="1.8" fill="#1f4f9f"/></svg>
</div>
<div class="layer" id="tb">
<div class="a" id="taskbar" style="left:0;top:860px;width:1440px;height:40px;background:#03060d"></div>
<div class="a" style="left:0;top:860px;width:903px;height:40px;background:#252525"></div>
<div class="a" style="left:0;top:860px;width:48px;height:40px;background:#202020"></div>
<div class="a" style="left:48px;top:860px;width:344px;height:40px;background:#333333"></div>
<svg class="a" style="left:16px;top:872px" width="17" height="17" viewBox="0 0 17 17"><polygon points="0,2.4 7,1.4 7,8 0,8" fill="#fff"/><polygon points="8,1.25 17,0 17,8 8,8" fill="#fff"/><polygon points="0,9 7,9 7,15.6 0,14.6" fill="#fff"/><polygon points="8,9 17,9 17,17 8,15.75" fill="#fff"/></svg>
<span class="t" style="left:60.50px;top:873.00px;font-size:15px;color:#a0a0a0;letter-spacing:-0.207px;">Rechercher sur le web et dans Windows</span>
<svg class="a" style="left:405px;top:872px" width="22" height="16" viewBox="0 0 22 16"><rect x="4.5" y="1" width="13" height="13.5" fill="none" stroke="#fff" stroke-width="1.5"/><polyline points="2.8,3 0.8,3 0.8,12.5 2.8,12.5" fill="none" stroke="#fff" stroke-width="1.3"/><polyline points="19.2,3 21.2,3 21.2,12.5 19.2,12.5" fill="none" stroke="#fff" stroke-width="1.3"/></svg>
<div class="a" style="left:445px;top:872px;width:1px;height:16px;background:#4a4a4a"></div>
<div class="a" style="left:448px;top:872px;width:1px;height:16px;background:#4a4a4a"></div>
<svg class="a" style="left:474px;top:867px" width="23" height="25" viewBox="0 0 23 25"><path d="M6.5,7 C6.5,1 15,0.5 15.5,6.5" fill="none" stroke="#fff" stroke-width="1.4"/><polygon points="1,7 22,4 22,24.5 1,21" fill="#fff"/><g fill="#252525"><polygon points="5.5,10.3 10.3,9.7 10.3,13.8 5.5,14"/><polygon points="11.6,9.5 17.5,8.7 17.5,13.5 11.6,13.7"/><polygon points="5.5,15.2 10.3,15.1 10.3,19.4 5.5,18.8"/><polygon points="11.6,15.1 17.5,15 17.5,20.4 11.6,19.6"/></g></svg>
<svg class="a" style="left:503px;top:869px" width="8" height="5" viewBox="0 0 8 5"><polyline points="0.5,4.5 4,0.8 7.5,4.5" fill="none" stroke="#5a5a5a" stroke-width="1"/></svg>
<svg class="a" style="left:523px;top:868px" width="24" height="24" viewBox="0 0 24 24"><circle cx="12" cy="12" r="11.3" fill="#fbc116"/><path d="M12,12 L2.2,6.35 A11.3,11.3 0 0 1 21.8,6.35 Z" fill="#e33b2e"/><path d="M12,12 L2.2,6.35 A11.3,11.3 0 0 0 9.5,23 L14.5,13.5 Z" fill="#2da94f"/><path d="M12,6.8 L21.8,6.35 A11.3,11.3 0 0 0 2.2,6.35 Z" fill="#e33b2e"/><circle cx="12" cy="12" r="5.3" fill="#fff"/><circle cx="12" cy="12" r="4.2" fill="#4a8af4"/></svg>
<div class="a" style="left:515px;top:898px;width:40px;height:2px;background:#76b9ed"></div>
<svg class="a" style="left:574px;top:869px" width="21" height="21" viewBox="0 0 21 21"><path d="M1.2,9.5 C2.5,3.5 7,0.6 11.5,0.6 C17,0.6 20.4,4.6 20.4,10 L20.4,12.4 L7.2,12.4 C7.4,15.6 10,17 13,17 C15.4,17 17.6,16.3 19.4,15.2 L19.4,19.2 C17.4,20.2 15,20.8 12.2,20.8 C6.6,20.8 2.6,17.4 2.6,12 C2.6,8.6 4.6,5.8 7.4,4.4 C4.6,5 2.6,7 1.2,9.5 Z M7.3,8.6 L15,8.6 C15,6.2 13.6,4.6 11.3,4.6 C9.2,4.6 7.7,6.2 7.3,8.6 Z" fill="#0a78d7" fill-rule="evenodd"/></svg>
<div class="a" style="left:609px;top:860px;width:44px;height:40px;background:#4a4a4a"></div>
<div class="a" style="left:609px;top:898px;width:48px;height:2px;background:#76b9ed"></div>
<div class="a" style="left:656px;top:860px;width:1px;height:40px;background:#3a3a3a"></div>
<svg class="a" style="left:621px;top:870px" width="23" height="19" viewBox="0 0 23 19"><polygon points="0.5,1.2 8,1.2 9.8,3 22,3 22,18 0.5,18" fill="#f5cf58"/><rect x="2.5" y="2.3" width="4.5" height="0.9" fill="#fff6cf"/><rect x="0.5" y="4.6" width="21.5" height="13.4" fill="#fbe17f"/><polygon points="5.5,11 17,11 17,18.6 14.2,18.6 14.2,14.2 8.3,14.2 8.3,18.6 5.5,18.6" fill="#2f9ae8"/></svg>
<svg class="a" style="left:670px;top:868px" width="24" height="24" viewBox="0 0 24 24"><defs><linearGradient id="ffo" x1="0.2" y1="0" x2="0.6" y2="1"><stop offset="0" stop-color="#f29a22"/><stop offset="0.55" stop-color="#ea6a1e"/><stop offset="1" stop-color="#c92f16"/></linearGradient><linearGradient id="ffb" x1="0.3" y1="0" x2="0.7" y2="1"><stop offset="0" stop-color="#58c4f4"/><stop offset="0.5" stop-color="#1577cc"/><stop offset="1" stop-color="#071f7a"/></linearGradient></defs><circle cx="12" cy="12" r="11.3" fill="url(#ffo)"/><path d="M16.5,1.8 C21.5,3.6 23.8,8.6 23.2,13.2 C22.8,16.4 21,19 18.4,20.8 C20.6,17.6 21,14.4 20.4,11 C19.8,7.2 18.6,4.2 16.5,1.8 Z" fill="#ffd428"/><circle cx="13.2" cy="9.6" r="7.1" fill="url(#ffb)"/><path d="M18.2,3.4 C20.4,5.2 21.4,8 21.2,10.4 C20.4,8 19.4,5.6 18.2,3.4 Z" fill="#fff6c8"/><path d="M2.4,5.4 C3.2,3.8 4.3,3.2 4.3,3.2 C4.5,4.5 5.1,5.1 6,5.3 C7.5,4.6 9,4.4 10.3,4.6 C9.6,5.8 9.8,6.8 10.6,7.4 L12.6,7.6 C12.1,8.6 11.1,9.1 10,9.2 C9.6,10.4 9,10.9 8,11.1 C8.7,12.4 10,12.9 11.6,12.7 C13,12.5 14.1,12.4 14.8,13 C13.7,14.4 12.1,15 10.5,15.1 C12.1,16.5 14.6,16.6 16.6,15.3 C15.2,18.8 11,19.8 8,18.2 C4,16 1.8,11 2.4,5.4 Z" fill="#ee7c1e"/></svg>
<span class="t" style="left:704.50px;top:876.00px;font-size:12px;color:#0f0f0f;letter-spacing:0.144px;">Modifié le</span>
<span class="t" style="left:824.50px;top:876.00px;font-size:12px;color:#0f0f0f;letter-spacing:-0.179px;">Type</span>
<div class="a" style="left:697px;top:866px;width:1px;height:30px;background:#262626"></div>
<div class="a" style="left:817px;top:866px;width:1px;height:30px;background:#262626"></div>
<svg class="a" style="left:719px;top:869px" width="25" height="20" viewBox="0 0 25 20"><polygon points="0,7 12.5,0.5 25,7 25,19.5 0,19.5" fill="#fff"/><polygon points="2.5,7.6 23,7.6 13.5,12 20,17.6 9.5,12.2" fill="#252525"/></svg>
<div class="a" style="left:711px;top:898px;width:40px;height:2px;background:#76b9ed"></div>
<svg class="a" style="left:770px;top:868px" width="22" height="22" viewBox="0 0 22 22"><rect x="0.5" y="5" width="21" height="16.5" fill="#fff"/><g stroke="#9a9a9a" stroke-width="0.8"><line x1="2" y1="11" x2="20" y2="11"/><line x1="2" y1="14" x2="20" y2="14"/><line x1="2" y1="17" x2="20" y2="17"/><line x1="2" y1="20" x2="20" y2="20"/></g><rect x="7.5" y="0" width="11.5" height="9" fill="#2f7aa6"/><path d="M7.5,9 L19,9 L19,12.5 L13.2,19 L7.5,12.5 Z" fill="#9cc3dc"/><path d="M10.5,13 L13.2,16 L16,13 Z" fill="#fff"/></svg>
<div class="a" style="left:760px;top:898px;width:40px;height:2px;background:#76b9ed"></div>
<svg class="a" style="left:1222px;top:865px" width="30" height="30" viewBox="0 0 30 30"><circle cx="9.7" cy="19" r="8.2" fill="#2a8fd8" stroke="#fff" stroke-width="1.6"/><circle cx="6.8" cy="20" r="1.5" fill="#fff"/><circle cx="10.5" cy="15.5" r="1.4" fill="#fff"/><circle cx="11" cy="23.5" r="1.5" fill="#fff"/><circle cx="18" cy="10.8" r="9.6" fill="#1a8fe0"/><rect x="16.6" y="8.6" width="2.9" height="8" fill="#fff"/><circle cx="18" cy="5.4" r="1.7" fill="#fff"/></svg>
<svg class="a" style="left:1262px;top:876px" width="13" height="8" viewBox="0 0 13 8"><polyline points="0.7,7 6.5,1.2 12.3,7" fill="none" stroke="#fff" stroke-width="1.3"/></svg>
<svg class="a" style="left:1292px;top:872px" width="17" height="17" viewBox="0 0 17 17"><polygon points="0.5,0.5 16,0.5 16,12.5 10.5,12.5 8.2,15.8 6,12.5 0.5,12.5" fill="#fff"/><g stroke="#03060d" stroke-width="1.1"><line x1="3" y1="3.8" x2="13.5" y2="3.8"/><line x1="3" y1="6.5" x2="13.5" y2="6.5"/><line x1="3" y1="9.2" x2="9.5" y2="9.2"/></g></svg>
<svg class="a" style="left:1324px;top:873px" width="24" height="14" viewBox="0 0 24 14"><rect x="0.7" y="0.7" width="22" height="12" rx="1" fill="none" stroke="#fff" stroke-width="1.3"/><g stroke="#fff" stroke-width="1.2" stroke-dasharray="1.6 1.2"><line x1="3" y1="4" x2="21" y2="4"/><line x1="3" y1="6.7" x2="21" y2="6.7"/></g><line x1="5" y1="9.6" x2="18.5" y2="9.6" stroke="#fff" stroke-width="1.2"/></svg>
<span class="t" style="left:1382.50px;top:865.00px;font-size:12px;color:#fff;letter-spacing:-0.646px;">10:52</span>
<span class="t" style="left:1365.80px;top:882.00px;font-size:12px;color:#fff;letter-spacing:-0.126px;">22/07/2016</span>
<div class="a" style="left:1435px;top:860px;width:1px;height:40px;background:#5a5f66"></div>
</div>
</body>
</html>
